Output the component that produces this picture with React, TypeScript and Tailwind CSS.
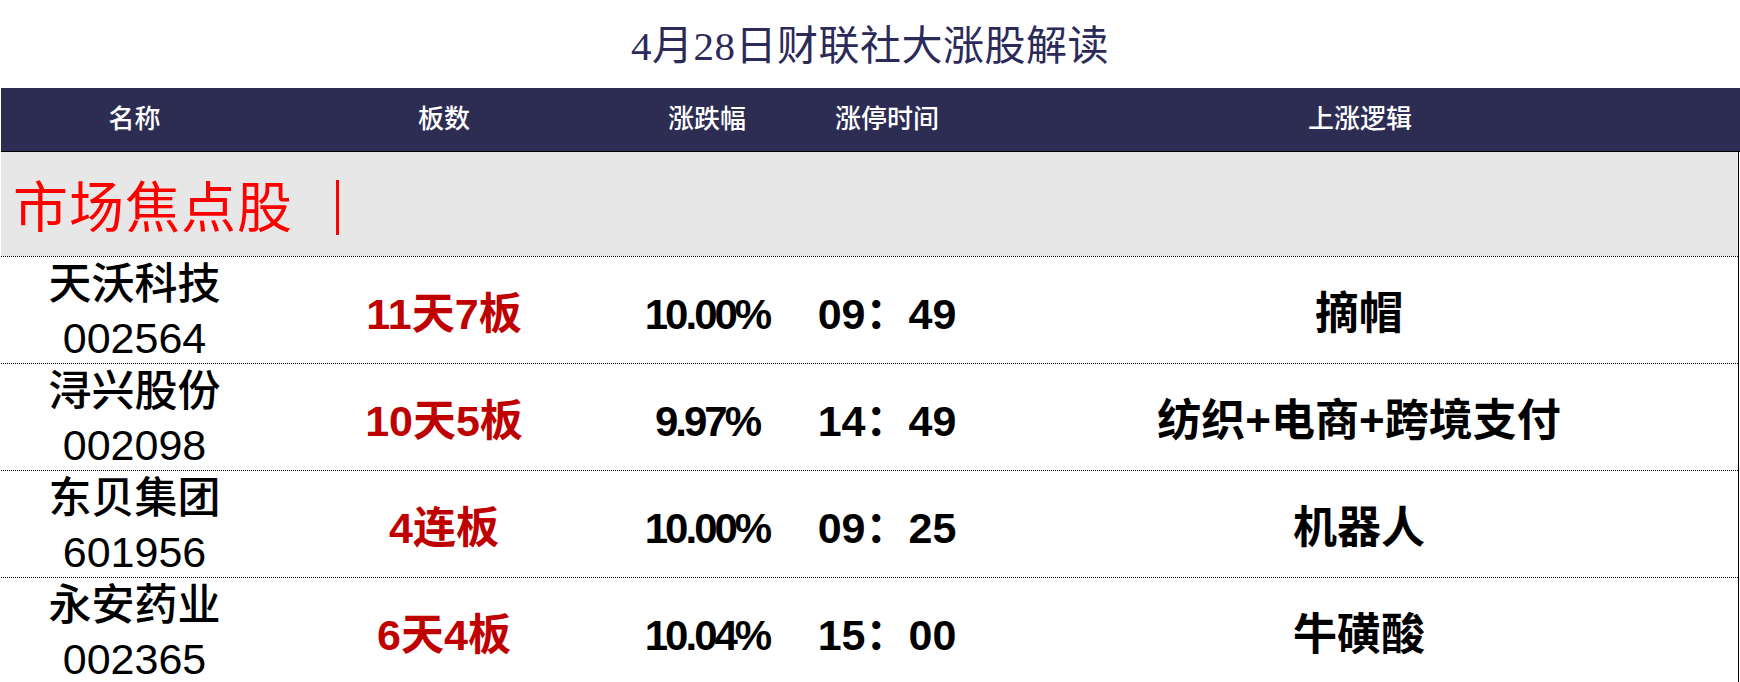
import React from "react";

type Stock = {
  name: string;
  code: string;
  boards: string;
  change: string;
  time: string;
  logic: string;
};

const STOCKS: Stock[] = [
  { name: "天沃科技", code: "002564", boards: "11天7板", change: "10.00%", time: "09：49", logic: "摘帽" },
  { name: "浔兴股份", code: "002098", boards: "10天5板", change: "9.97%", time: "14：49", logic: "纺织+电商+跨境支付" },
  { name: "东贝集团", code: "601956", boards: "4连板", change: "10.00%", time: "09：25", logic: "机器人" },
  { name: "永安药业", code: "002365", boards: "6天4板", change: "10.04%", time: "15：00", logic: "牛磺酸" },
];

const SANS = "font-['Liberation_Sans','Noto_Sans_CJK_SC',sans-serif]";
const COLS = "grid grid-cols-[267px_352px_174px_186px_1fr]";

export default function App() {
  return (
    <div className={`w-[1740px] h-[682px] bg-white overflow-hidden ${SANS}`}>
      {/* Title */}
      <div className="h-[88px] pt-[4px] flex items-center justify-center">
        <h1 className="text-[41px] leading-none tracking-[0.5px] text-[#2b2a58] font-normal font-['Liberation_Serif','Noto_Sans_CJK_SC',serif]">
          4月28日财联社大涨股解读
        </h1>
      </div>

      {/* Header */}
      <div className={`${COLS} ml-[1px] h-[64px] bg-[#2d2c53] border-b border-black text-white text-[26px] font-medium`}>
        <div className="flex items-center justify-center">名称</div>
        <div className="flex items-center justify-center">板数</div>
        <div className="flex items-center justify-center">涨跌幅</div>
        <div className="flex items-center justify-center">涨停时间</div>
        <div className="flex items-center justify-center">上涨逻辑</div>
      </div>

      <div className="ml-[1px] mr-[1px] border-r border-black">
        {/* Section */}
        <div className="h-[104px] bg-[#e7e7e7] flex items-center pl-[12px] pt-[8px] text-[#ff0000]">
          <span className="text-[55px] leading-none tracking-[1px] font-['Liberation_Serif','Noto_Sans_CJK_SC',serif]">
            市场焦点股
          </span>
          <span className="ml-[43px] mb-[2px] w-[3px] h-[55px] bg-[#ff0000]" />
        </div>

        {/* Rows */}
        {STOCKS.map((s, i) => (
          <div
            key={s.code}
            className={`${COLS} border-t border-dotted border-black ${
              i === STOCKS.length - 1 ? "h-[106px] border-b border-b-solid" : "h-[107px]"
            }`}
          >
            <div className="flex flex-col items-center justify-center text-black text-[43px] font-medium leading-[54px]">
              <span>{s.name}</span>
              <span>{s.code}</span>
            </div>
            <div className="flex items-center justify-center pt-[6px] text-[#c00000] text-[43px] font-bold">
              {s.boards}
            </div>
            <div className="flex items-center justify-center pt-[6px] text-black text-[42px] font-bold tracking-[-3px]">
              {s.change}
            </div>
            <div className="flex items-center justify-center pt-[6px] text-black text-[43px] font-bold">
              {s.time}
            </div>
            <div className="flex items-center justify-center pt-[6px] text-black text-[44px] font-bold">
              {s.logic}
            </div>
          </div>
        ))}
      </div>
    </div>
  );
}
